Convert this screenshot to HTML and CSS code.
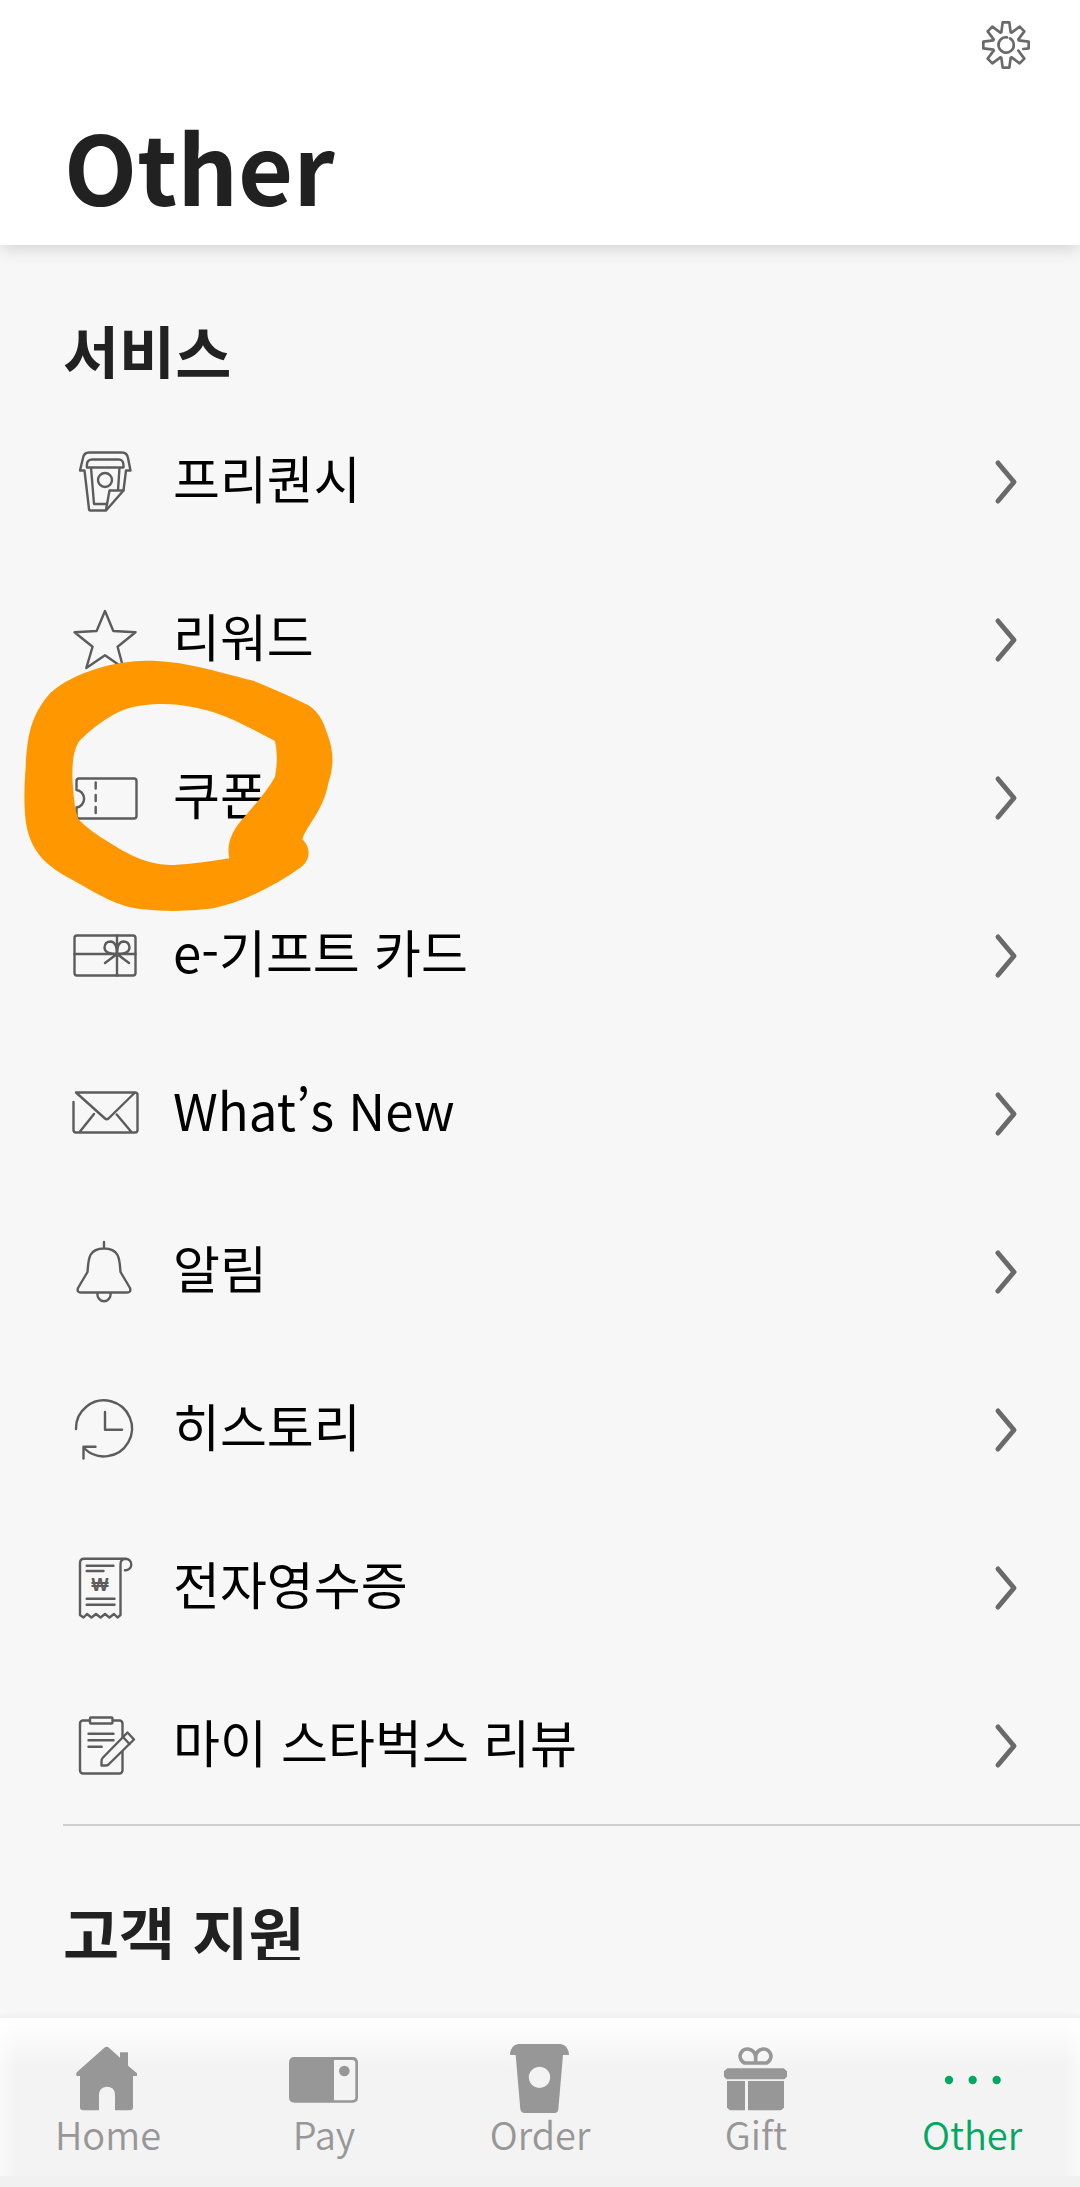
FILE: index.html
```html
<!DOCTYPE html>
<html lang="ko">
<head>
<meta charset="utf-8">
<meta name="viewport" content="width=device-width, initial-scale=1">
<title>Other</title>
<link rel="stylesheet" href="styles.css">
</head>
<body>
<svg class="defs" aria-hidden="true">
  <symbol id="chevron" viewBox="0 0 28 48"><path d="M5 5L21 24L5 43"/></symbol>
</svg>

<header class="header">
  <button class="settings" type="button" aria-label="설정">
    <svg viewBox="-78 -78 156 156">
      <path d="M37 17L55 41L41 55L17 37L14 38L10 68L-10 68L-14 38L-17 37L-41 55L-55 41L-37 17L-38 14L-68 10L-68 -10L-38 -14L-37 -17L-55 -41L-41 -55L-17 -37L-14 -38L-10 -68L10 -68L14 -38L17 -37L41 -55L55 -41L37 -17L38 -14L68 -10L68 10L52 12"/>
      <path d="M12 -20A23 23 0 1 1 3 -23"/>
    </svg>
  </button>
  <h1 class="title">Other</h1>
</header>

<main class="content">
  <section class="section">
    <h2 class="section-title">서비스</h2>
    <ul class="menu">
      <li class="menu-item"><a class="menu-link" href="#frequency">
        <svg class="icon" viewBox="0 0 72 72">
          <path d="M11 24.5L14 12Q15 6.5 20 6.5H53Q58 6.5 59 12L61.5 24.5H57L54.5 44.5L37 64.5H21.5Q20 64.5 20 63L15.5 24.5Z"/>
          <path d="M18 21.5Q17 13.5 23 13.5H50Q55 13.5 54.5 21.5ZM22 21.5L25 58H37M50.5 21.5L49 44.5M54.5 44.5H40.5L37 64"/>
          <circle cx="36" cy="34" r="7"/>
        </svg>
        <span class="label">프리퀀시</span><svg class="chevron"><use href="#chevron"/></svg></a></li>
      <li class="menu-item"><a class="menu-link" href="#rewards">
        <svg class="icon" viewBox="0 0 72 72"><path d="M36 7L44.3 27L66.5 28.3L48.6 42.7L54.3 64L36 51.3L17.3 64L23.6 42.7L5.5 28.3L27.6 27Z"/></svg>
        <span class="label">리워드</span><svg class="chevron"><use href="#chevron"/></svg></a></li>
      <li class="menu-item"><a class="menu-link" href="#coupon">
        <svg class="icon" viewBox="0 0 72 72">
          <path d="M7.5 28V19Q7.5 16.5 10 16.5H65Q67.5 16.5 67.5 19V54Q67.5 56.5 65 56.5H10Q7.5 56.5 7.5 54V45.5A8.5 8.8 0 0 0 7.5 28"/>
          <path d="M26.7 20.5V26.5M26.7 33V39M26.7 45V51"/>
        </svg>
        <span class="label">쿠폰</span><svg class="chevron"><use href="#chevron"/></svg></a>
        <svg class="marker" viewBox="0 0 1080 870" aria-hidden="true"><path fill-rule="evenodd" d="M440 62C550 62 640 92 760 122Q880 172 925 196C965 222 972 255 985 290Q1010 360 985 430C970 510 925 550 907 597C930 620 935 655 905 680C820 740 730 785 640 805Q530 820 430 808C350 800 300 765 200 710C130 670 95 630 80 560Q68 500 77 380C82 290 90 230 150 160C220 95 350 62 440 62ZM490 192C410 192 370 208 340 224Q285 255 243 298C215 325 215 400 219 440Q222 500 235 538Q270 575 340 615C420 665 470 675 520 675Q600 670 688 655C680 620 690 580 725 540C760 500 800 455 825 410Q836 350 825 303C730 255 640 195 490 192Z"/></svg>
      </li>
      <li class="menu-item"><a class="menu-link" href="#egift">
        <svg class="icon" viewBox="0 0 72 72">
          <rect x="5.5" y="15.5" width="61" height="40" rx="2.5"/>
          <path d="M5.5 34H66.5M48 15.5V55.5M36 43L48 34L60 43"/>
          <path d="M48 34Q35.5 34 35.5 27.5Q36 21.5 41.5 21.5Q48 22 48 34Q48 22 54.5 21.5Q60 21.5 60.5 27.5Q60.5 34 48 34"/>
        </svg>
        <span class="label">e-기프트 카드</span><svg class="chevron"><use href="#chevron"/></svg></a></li>
      <li class="menu-item"><a class="menu-link" href="#news">
        <svg class="icon" viewBox="0 0 72 72"><path d="M4.5 24V52Q4.5 54.5 7 54.5H66Q68.5 54.5 68.5 52V17Q68.5 14.5 66 14.5H7L36 40.5Q37.7 42 39.5 40.5L66 14.5M25 36L11 53.5M47.7 36.5L62 53.5"/></svg>
        <span class="label">What’s New</span><svg class="chevron"><use href="#chevron"/></svg></a></li>
      <li class="menu-item"><a class="menu-link" href="#alerts">
        <svg class="icon" viewBox="0 0 72 72"><path d="M35 6V12M18.5 36C19.5 24 19 12.5 35 12.5S50.5 24 51.5 36L61 52Q62.5 56.5 58 56.5H12Q7.5 56.5 9 52ZM28.5 57A6.6 7 0 1 0 41.5 57"/></svg>
        <span class="label">알림</span><svg class="chevron"><use href="#chevron"/></svg></a></li>
      <li class="menu-item"><a class="menu-link" href="#history">
        <svg class="icon" viewBox="0 0 72 72"><path d="M7 35A28 28 0 1 1 15 54M14.5 64.5V52.7H26.5M36 18V35.7H53"/></svg>
        <span class="label">히스토리</span><svg class="chevron"><use href="#chevron"/></svg></a></li>
      <li class="menu-item"><a class="menu-link" href="#receipts">
        <svg class="icon" viewBox="0 0 72 72">
          <path d="M57 6.7H15Q11 6.7 11 11V63L14.5 65.5L18 62L22.5 65.5L27 62L31.5 65.5L36 62L40.5 65.5L45 62L48.5 65.5L51.5 63V12Q51.5 6.7 57 6.7A5.8 5.8 0 0 1 56 18.3M17.7 13.7H44.5M17.7 19H34.5M17.7 46.7H45.5M17.7 52.7H45.5"/>
          <text class="won" x="31" y="39">₩</text>
        </svg>
        <span class="label">전자영수증</span><svg class="chevron"><use href="#chevron"/></svg></a></li>
      <li class="menu-item"><a class="menu-link" href="#review">
        <svg class="icon" viewBox="0 0 72 72">
          <rect x="11" y="10.5" width="42.5" height="53" rx="3"/>
          <rect class="paper" x="21" y="7.5" width="22.5" height="6" rx="1"/>
          <path d="M19.5 23.7H44.5M19.5 30.3H44.5M19.5 36.7H32.7"/>
          <path class="paper" d="M58.5 22.5L65 29.5L40 54Q39 55.5 37 55.5H32.5V51.5Q32.5 49 34 47.5Z"/><path d="M54 27L60.5 34"/>
        </svg>
        <span class="label">마이 스타벅스 리뷰</span><svg class="chevron"><use href="#chevron"/></svg></a></li>
    </ul>
  </section>
  <section class="section">
    <h2 class="section-title">고객 지원</h2>
  </section>
</main>

<nav class="tabs">
  <a class="tab" href="#home">
    <svg class="tab-icon" viewBox="216 732 216 216"><path d="M313 743Q320 738 327 743L360 773V757H384V797L411 820V828H399V922Q399 931 390 931H345V882Q343 860 320 860Q298 862 297 882V931H250Q240 931 240 922V828H230Q226 820 232 815Z"/></svg>
    Home</a>
  <a class="tab" href="#pay">
    <svg class="tab-icon" viewBox="864 732 216 216"><path fill-rule="evenodd" d="M884 771H1058Q1074 771 1074 788V892Q1074 908 1058 908H884Q867 908 867 892V788Q867 771 884 771ZM1002 780V901H1056Q1066 901 1066 891V789Q1066 780 1056 780Z"/><circle cx="1033" cy="813" r="16"/></svg>
    Pay</a>
  <a class="tab" href="#order">
    <svg class="tab-icon" viewBox="762 102 216 216"><path fill-rule="evenodd" d="M804 102H932Q956 106 957 135H939L925 298Q924 309 914 309H824Q813 309 811 298L797 135H780Q781 106 804 102ZM868 170A32 32 0 1 0 869 170Z"/></svg>
    Order</a>
  <a class="tab" href="#gift">
    <svg class="tab-icon" viewBox="120 102 216 216"><path d="M142 175H311L321 184V200L313 208H140L132 200V184ZM141 213H195V301H150L141 293ZM204 213H312V293L303 301H204Z"/><path class="ribbon" d="M227 159H193Q180 150 180 137Q185 116 204 117Q224 120 227 140Q229 120 249 117Q268 116 273 137Q273 150 260 159H227V137"/></svg>
    Gift</a>
  <a class="tab tab-active" href="#other" aria-current="page">
    <svg class="tab-icon" viewBox="768 102 216 216"><circle cx="807" cy="210" r="12.5"/><circle cx="878" cy="210" r="12.5"/><circle cx="950" cy="210" r="12.5"/></svg>
    Other</a>
</nav>
</body>
</html>
```

FILE: styles.css
```css
* {
  box-sizing: border-box;
  margin: 0;
  padding: 0;
}

body {
  display: flex;
  flex-direction: column;
  min-height: 100vh;
  background: #f7f7f7;
  color: #212121;
  font-family: "Noto Sans CJK KR", "Noto Sans", sans-serif;
}

a {
  color: inherit;
  text-decoration: none;
}

svg {
  display: block;
  flex: none;
}

.defs {
  position: absolute;
  width: 0;
  height: 0;
}

.header {
  display: flex;
  flex-direction: column;
  gap: 46px;
  padding: 19px 48px 32px 64px;
  background: #fff;
  box-shadow: 0 4px 16px rgba(0, 0, 0, 0.14);
}

.settings {
  align-self: flex-end;
  width: 52px;
  height: 52px;
  border: 0;
  background: none;
}

.settings svg {
  fill: none;
  stroke: #6a6a6a;
  stroke-width: 8;
  stroke-linecap: round;
  stroke-linejoin: round;
}

.title {
  font-size: 95px;
  font-weight: 700;
  line-height: 96px;
}

.content {
  flex: 1;
}

.section {
  padding: 70px 0 0 63px;
}

.section-title {
  height: 64px;
  overflow: hidden;
  font-size: 61px;
  font-weight: 700;
  line-height: 74px;
}

.menu {
  margin-top: 23px;
  border-bottom: 2px solid #cfcfcf;
  list-style: none;
}

.menu-item {
  position: relative;
}

.menu-link {
  display: flex;
  align-items: center;
  height: 158px;
  padding: 2px 59px 0 6px;
}

.icon {
  width: 72px;
  height: 72px;
  fill: none;
  stroke: #5c5c5c;
  stroke-width: 2.4;
  stroke-linecap: round;
  stroke-linejoin: round;
}

.paper {
  fill: #f7f7f7;
}

.won {
  fill: #5c5c5c;
  stroke: none;
  font-family: "Liberation Sans", sans-serif;
  font-size: 18px;
  font-weight: 700;
  text-anchor: middle;
}

.label {
  flex: 1;
  padding: 0 0 10px 32px;
  color: #000;
  font-size: 51px;
  line-height: 64px;
}

.chevron {
  width: 28px;
  height: 48px;
  fill: none;
  stroke: #6a6a6a;
  stroke-width: 5;
  stroke-linecap: round;
  stroke-linejoin: round;
}

/* Hand-drawn highlight lying over the coupon row */
.marker {
  position: absolute;
  top: -78px;
  left: -63px;
  z-index: 1;
  width: 360px;
  height: 290px;
  fill: #ff9800;
  pointer-events: none;
}

.tabs {
  display: grid;
  grid-template-columns: repeat(5, 1fr);
  padding: 26px 0 24px;
  border-bottom: 11px solid #f1f1f1;
  background:
    linear-gradient(#fff, rgba(255, 255, 255, 0) 50px),
    linear-gradient(90deg, #fafafa, #f3f3f3 16px, #f3f3f3 calc(100% - 16px), #fafafa);
  box-shadow: 0 -2px 8px rgba(0, 0, 0, 0.04);
}

.tab {
  display: flex;
  flex-direction: column;
  align-items: center;
  color: #979797;
  font-family: "Noto Sans CJK KR DemiLight", "Noto Sans CJK KR", sans-serif;
  font-size: 38px;
  font-weight: 350;
  line-height: 36px;
}

.tab-icon {
  width: 72px;
  height: 72px;
  fill: currentColor;
}

.ribbon {
  fill: none;
  stroke: currentColor;
  stroke-width: 11;
}

.tab-active {
  color: #00a862;
}
```
